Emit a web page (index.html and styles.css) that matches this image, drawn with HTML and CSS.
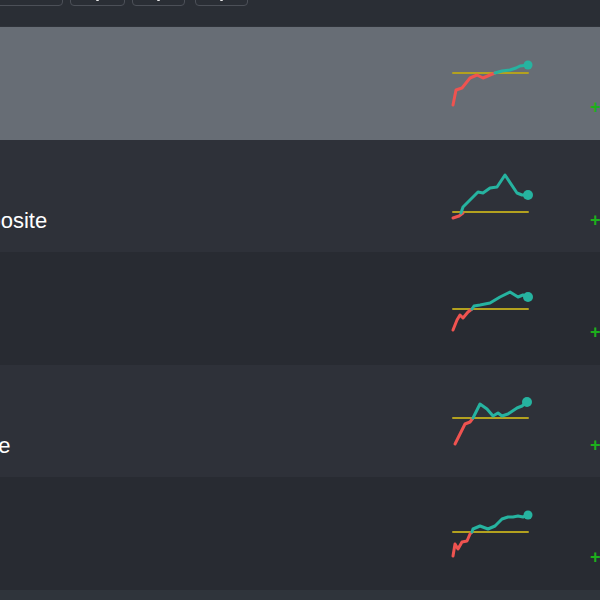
FILE: index.html
```html
<!DOCTYPE html>
<html lang="en">

<head>
    <meta charset="UTF-8">
    <meta name="viewport" content="width=device-width, initial-scale=1.0">
    <title>Markets</title>
    <link rel="stylesheet" href="styles.css">
</head>

<body>
    <div class="toolbar">
        <button class="tool-button b1" aria-label="1D"></button>
        <button class="tool-button b2" aria-label="5D"><span class="pip"></span></button>
        <button class="tool-button b3" aria-label="1M"><span class="pip"></span></button>
        <button class="tool-button b4" aria-label="1Y"><span class="pip"></span></button>
    </div>

    <div class="quote-list">
        <div class="quote-row active">
            <div class="quote-name">
                <span class="symbol">DJI</span>
                <span class="title">Dow Jones</span>
            </div>
            <svg class="spark" viewBox="0 0 84 56" width="84" height="56">
                <line class="base" x1="3" y1="18" x2="78" y2="18" />
                <polyline class="down" points="3,50 6,35 12,33 20,23 27,20 33,23 40,20 45,18" />
                <polyline class="up" points="45,18 52,16 60,15 66,13 70,11 78,10" />
                <circle class="dot" cx="78" cy="10" r="4.5" />
            </svg>
            <div class="quote-change">+</div>
        </div>

        <div class="quote-row">
            <div class="quote-name">
                <span class="symbol">IXIC</span>
                <span class="title">NASDAQ Composite</span>
            </div>
            <svg class="spark" viewBox="0 0 84 56" width="84" height="56">
                <line class="base" x1="3" y1="44" x2="78" y2="44" />
                <polyline class="down" points="3,50 9,48 13,45" />
                <polyline class="up" points="11,45 13,39 23,29 28,24 33,25 40,20 47,19 55,7 67,25 72,27 78,27" />
                <circle class="dot" cx="78" cy="27" r="5" />
            </svg>
            <div class="quote-change">+</div>
        </div>

        <div class="quote-row">
            <div class="quote-name">
                <span class="symbol">SPX</span>
                <span class="title">S&amp;P 500</span>
            </div>
            <svg class="spark" viewBox="0 0 84 56" width="84" height="56">
                <line class="base" x1="3" y1="29" x2="78" y2="29" />
                <polyline class="down" points="3,50 7,40 10,35 13,38 18,32 22,29" />
                <polyline class="up" points="22,29 24,26 30,25 40,23 50,17 60,12 68,17 73,15 78,17" />
                <circle class="dot" cx="78" cy="17" r="5" />
            </svg>
            <div class="quote-change">+</div>
        </div>

        <div class="quote-row">
            <div class="quote-name">
                <span class="symbol">FTSE</span>
                <span class="title">FTSE Composite</span>
            </div>
            <svg class="spark" viewBox="0 0 84 56" width="84" height="56">
                <line class="base" x1="3" y1="25" x2="78" y2="25" />
                <polyline class="down" points="5,51 10,41 15,31 20,29 23,25" />
                <polyline class="up" points="23,25 30,11 37,16 43,23 48,20 52,23 58,21 67,15 72,13 77,9" />
                <circle class="dot" cx="77" cy="9" r="5" />
            </svg>
            <div class="quote-change">+</div>
        </div>

        <div class="quote-row">
            <div class="quote-name">
                <span class="symbol">RUT</span>
                <span class="title">Russell 2000</span>
            </div>
            <svg class="spark" viewBox="0 0 84 56" width="84" height="56">
                <line class="base" x1="3" y1="27" x2="78" y2="27" />
                <polyline class="down" points="3,51 5,39 8,44 12,37 17,36 20,29 22,27" />
                <polyline class="up" points="22,27 23,24 30,21 38,24 45,21 52,14 58,12 63,12 68,11 73,12 78,10" />
                <circle class="dot" cx="78" cy="10" r="4.5" />
            </svg>
            <div class="quote-change">+</div>
        </div>
    </div>
    <div class="footer-strip"></div>
</body>

</html>
```

FILE: styles.css
```css
body {
    font-family: "Liberation Sans", Arial, sans-serif;
    background-color: #282b31;
    margin: 0;
    padding: 0;
    width: 600px;
    height: 600px;
    overflow: hidden;
}

.toolbar {
    height: 26px;
    background-color: #2a2e35;
    display: flex;
    gap: 7px;
    align-items: flex-end;
    margin-left: -4px;
    overflow: hidden;
    box-sizing: border-box;
    padding-bottom: 20px;
}

.tool-button {
    height: 28px;
    background-color: #2a2e35;
    border: 1px solid #4c5058;
    border-radius: 4px;
    padding: 0;
    flex-shrink: 0;
    display: flex;
    align-items: flex-end;
    justify-content: center;
}

.b1 {
    width: 67px;
}

.b2 {
    width: 55px;
}

.b3 {
    width: 53px;
}

.b4 {
    width: 53px;
    margin-left: 3px;
}

.pip {
    width: 3px;
    height: 2px;
    border-radius: 1px;
    background-color: #e8e8e8;
    margin-bottom: 4px;
}

.quote-list {
    display: grid;
    grid-auto-rows: 112.6px;
    margin-left: -157px;
    border-top: 1px solid #2f333a;
}

.quote-row {
    display: grid;
    grid-template-columns: 607px 84px 1fr;
    align-items: start;
    background-color: #282b32;
}

.quote-row:nth-child(even) {
    background-color: #2e3139;
}

.quote-row.active {
    background-color: #676d75;
}

.quote-name {
    display: flex;
    flex-direction: column;
    padding-top: 42px;
    color: #ffffff;
}

.symbol {
    font-size: 14px;
    font-weight: bold;
    height: 26px;
    visibility: hidden;
}

.title {
    font-size: 22px;
    line-height: 25px;
}

.spark {
    margin-top: 28px;
    fill: none;
    stroke-linecap: round;
    stroke-linejoin: round;
}

.spark .base {
    stroke: #b3a11f;
    stroke-width: 2;
}

.spark .down {
    stroke: #ef5350;
    stroke-width: 3;
}

.spark .up {
    stroke: #26b3a0;
    stroke-width: 3;
}

.spark .dot {
    fill: #26b3a0;
    stroke: none;
}

.quote-change {
    margin-top: 70px;
    padding-left: 56px;
    color: #1cb01c;
    font-size: 18px;
    font-weight: bold;
    line-height: 20px;
    white-space: nowrap;
}

.footer-strip {
    height: 12px;
    background-color: #2f343b;
}
```
